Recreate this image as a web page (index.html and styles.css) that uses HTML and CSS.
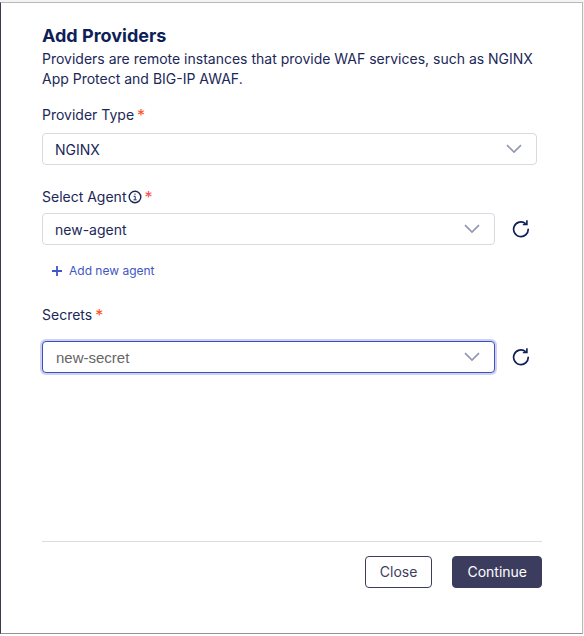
FILE: index.html
```html
<!DOCTYPE html>
<html lang="en">
<head>
<meta charset="utf-8">
<title>Add Providers</title>
<link rel="stylesheet" href="styles.css">
</head>
<body>
<main class="panel">
  <header class="intro">
    <h1 class="title">Add Providers</h1>
    <p class="description">Providers are remote instances that provide WAF services, such as NGINX App Protect and BIG-IP AWAF.</p>
  </header>
  <form class="form">
    <div class="field field-type">
      <label class="label" for="type">Provider Type<span class="required">*</span></label>
      <div class="row">
        <div class="select">
          <select id="type"><option>NGINX</option></select>
          <svg class="chevron" viewBox="0 0 16 10"><path d="M1 1.200 8 8l7-6.800"/></svg>
        </div>
      </div>
    </div>
    <div class="field">
      <label class="label" for="agent">Select Agent<svg class="info" viewBox="0 0 14 14"><circle cx="7" cy="7" r="5.800"/><path d="M5.600 6.300H7.200V9.500M5.500 9.800H8.700M6.400 4.200H7.700"/></svg><span class="required required-light">*</span></label>
      <div class="row">
        <div class="select">
          <select id="agent"><option>new-agent</option></select>
          <svg class="chevron" viewBox="0 0 16 10"><path d="M1 1.200 8 8l7-6.800"/></svg>
        </div>
        <button class="refresh" type="button" aria-label="Refresh agents"><svg viewBox="0 0 18 18"><path d="M16.200 8.800A7.300 7.300 0 1 1 13.600 3.700"/><path class="tip" d="M14.100 0.300H15.700V5.200H10.800V4.200L13.200 3.700 14.100 2.800Z"/></svg></button>
      </div>
      <button class="add" type="button"><svg viewBox="0 0 12 12"><path d="M6 1V11M1 6H11"/></svg>Add new agent</button>
    </div>
    <div class="field field-secret">
      <label class="label" for="secret">Secrets<span class="required">*</span></label>
      <div class="row">
        <div class="select active">
          <select id="secret"><option>new-secret</option></select>
          <svg class="chevron" viewBox="0 0 16 10"><path d="M1 1.200 8 8l7-6.800"/></svg>
        </div>
        <button class="refresh" type="button" aria-label="Refresh secrets"><svg viewBox="0 0 18 18"><path d="M16.200 8.800A7.300 7.300 0 1 1 13.600 3.700"/><path class="tip" d="M14.100 0.300H15.700V5.200H10.800V4.200L13.200 3.700 14.100 2.800Z"/></svg></button>
      </div>
    </div>
  </form>
  <footer class="actions">
    <button class="button" type="button">Close</button>
    <button class="button primary" type="button">Continue</button>
  </footer>
</main>
</body>
</html>
```
FILE: styles.css
```css
* {
  box-sizing: border-box;
}

html {
  background: #f3f3f3;
}

body {
  display: flex;
  min-height: 100vh;
  margin: 0;
  padding: 2px 1px 0 0;
  border-bottom: 2px solid #fff;
  color: #1b2858;
  font: 14px/20px Inter, "Liberation Sans", sans-serif;
}

button,
select {
  font: inherit;
  cursor: pointer;
}

.panel {
  display: flex;
  flex: 1;
  flex-direction: column;
  padding: 23px 40px 45px 41px;
  border: 1px solid #b9b9bb;
  border-left-color: #3c3a50;
  border-bottom-color: #949194;
  background: #fff;
}

.title {
  margin: 0;
  color: #0e1e57;
  font-size: 18px;
  line-height: 20px;
  font-weight: 700;
}

.description {
  margin: 3px 0 0;
}

.form {
  display: flex;
  flex-direction: column;
  gap: 22px;
  margin: 16px 5px 0 0;
}

.field {
  display: flex;
  flex-direction: column;
  gap: 6px;
}

.field-type {
  gap: 8px;
}

.field-secret {
  gap: 16px;
  margin-top: 2px;
}

.label {
  display: flex;
  align-items: center;
}

.required {
  margin-left: 3px;
  color: #ff4f1a;
  font-size: 16px;
  line-height: 20px;
}

.required-light {
  margin-left: 2px;
  color: #f94d4d;
}

.info {
  width: 14px;
  height: 14px;
  margin-left: 2px;
}

svg {
  display: block;
  fill: none;
  stroke: currentColor;
}

.info circle {
  stroke-width: 1.400;
}

.row {
  display: flex;
  align-items: center;
  gap: 16px;
}

.select {
  display: grid;
  flex: 1;
  align-items: center;
}

.select > * {
  grid-area: 1 / 1;
}

.select select {
  width: 100%;
  height: 32px;
  padding: 2px 40px 0 12px;
  appearance: none;
  border: 1px solid #d9d9e2;
  border-radius: 4px;
  outline: none;
  background: #fff;
  color: #1b2858;
}

.select.active select {
  padding-left: 13px;
  border-color: #3b4fc4;
  box-shadow: 0 0 0 2px #ced2f0;
  color: #666;
  font-family: "Liberation Sans", sans-serif;
  font-size: 15px;
}

.chevron {
  justify-self: end;
  width: 16px;
  height: 10px;
  margin-right: 15px;
  color: #9498b6;
  stroke-width: 1.700;
  pointer-events: none;
}

.refresh {
  width: 26px;
  height: 32px;
  padding: 0 0 0 1px;
  border: 0;
  background: none;
  color: #0e1e57;
}

.refresh svg {
  width: 18px;
  height: 18px;
  stroke-width: 1.700;
}

.refresh .tip {
  fill: currentColor;
  stroke: none;
}

.add {
  display: flex;
  align-items: center;
  align-self: flex-start;
  gap: 6px;
  margin: 10px 0 0 9px;
  padding: 0;
  border: 0;
  background: none;
  color: #4056c4;
  font-size: 12px;
  line-height: 20px;
}

.add svg {
  width: 12px;
  height: 12px;
  stroke-width: 1.800;
}

.actions {
  display: flex;
  justify-content: flex-end;
  gap: 20px;
  margin-top: auto;
  padding-top: 14px;
  border-top: 1px solid #dcdcdf;
}

.button {
  height: 32px;
  padding: 0 14px;
  border: 1px solid #3c3d5e;
  border-radius: 4px;
  background: #fff;
  color: #3c3d5e;
}

.primary {
  background: #3c3d5e;
  color: #fff;
}
```
